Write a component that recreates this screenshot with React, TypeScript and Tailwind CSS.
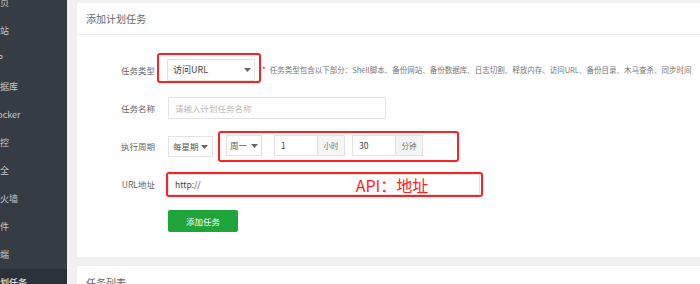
import React from "react";

const Caret = () => (
  <svg width="7" height="4" viewBox="0 0 7 4" className="shrink-0">
    <polygon points="0,0 7,0 3.5,4" fill="#666" />
  </svg>
);

const sideItems = ["首页", "网站", "FTP", "数据库", "Docker", "监控", "安全", "防火墙", "文件", "终端", "计划任务"];

export default function App() {
  return (
    <div className="w-[700px] h-[284px] overflow-hidden flex bg-[#f0f0f0] font-['Noto_Sans_CJK_SC','Noto_Sans',sans-serif]">
      <div className="w-[67px] shrink-0 bg-[#353c44] overflow-hidden">
        <div className="flex flex-col mt-[-11px]">
          {sideItems.map((t, i) => (
            <div
              key={t}
              className={
                "h-[28px] flex items-center whitespace-nowrap text-[9px] text-[#c8c8c8] " +
                (i === sideItems.length - 1 ? "bg-[#2b3138] text-white" : "")
              }
            >
              <span className={t === "FTP" ? "ml-[-13px]" : "ml-[-9px]"}>{t}</span>
            </div>
          ))}
        </div>
      </div>

      <div className="flex-1 flex flex-col pl-[10px] pt-[3px] gap-[9px] min-w-0">
        <div className="h-[254px] shrink-0 bg-white rounded-l-[2px] flex flex-col">
          <div className="h-[32px] border-b border-[#eeeeee] pl-[9px] flex items-center text-[10px] text-[#666]">
            添加计划任务
          </div>

          <div className="flex flex-col pt-[18px] text-[8.5px] text-[#555]">
            {/* Row 1 */}
            <div className="flex items-center">
              <div className="w-[80px] pr-[2px] pt-[4px] text-right text-[#666]">任务类型</div>
              <div className="border-2 border-[#ff2121] rounded-[3px] pl-[8px] pr-[4px] pt-[4px]">
                <div className="w-[88px] h-[22px] border border-[#e3e3e3] flex items-center justify-between pl-[5px] pr-[3px] text-[9px] text-[#444]">
                  <span>访问URL</span>
                  <Caret />
                </div>
              </div>
              <div className="pt-[4px] flex items-center whitespace-nowrap">
                <span className="ml-[1px] text-[#f00] text-[8px]">*</span>
                <span className="ml-[4px] text-[7.5px] text-[#777]">
                  任务类型包含以下部分：Shell脚本、备份网站、备份数据库、日志切割、释放内存、访问URL、备份目录、木马查杀、同步时间
                </span>
              </div>
            </div>

            {/* Row 2 */}
            <div className="flex items-center mt-[14px]">
              <div className="w-[80px] pr-[2px] text-right text-[#666]">任务名称</div>
              <div className="ml-[11px] w-[218px] h-[22px] border border-[#e3e3e3] rounded-[2px] flex items-center pl-[6px] text-[#bbb]">
                请输入计划任务名称
              </div>
            </div>

            {/* Row 3 */}
            <div className="flex items-center mt-[12px]">
              <div className="w-[80px] pr-[2px] text-right text-[#666]">执行周期</div>
              <div className="ml-[11px] w-[45px] h-[21px] border border-[#e3e3e3] flex items-center justify-between pl-[4px] pr-[4px] text-[#555]">
                <span>每星期</span>
                <Caret />
              </div>
              <div className="ml-[5px] border-2 border-[#ff2121] rounded-[3px] pl-[6px] pr-[34px] pt-[2px] pb-[4px] flex items-center">
                <div className="w-[36px] h-[21px] border border-[#e3e3e3] flex items-center justify-between pl-[3px] pr-[3px]">
                  <span>周一</span>
                  <Caret />
                </div>
                <div className="ml-[12px] flex h-[21px]">
                  <div className="w-[44px] border border-[#e3e3e3] flex items-center pl-[6px] text-[#444]">1</div>
                  <div className="w-[27px] border border-l-0 border-[#e3e3e3] bg-[#f5f5f5] flex items-center justify-center text-[7.5px] text-[#777]">小时</div>
                </div>
                <div className="ml-[7px] flex h-[21px]">
                  <div className="w-[44px] border border-[#e3e3e3] flex items-center pl-[6px] text-[#444]">30</div>
                  <div className="w-[27px] border border-l-0 border-[#e3e3e3] bg-[#f5f5f5] flex items-center justify-center text-[7.5px] text-[#777]">分钟</div>
                </div>
              </div>
            </div>

            {/* Row 4 */}
            <div className="flex items-center mt-[10px]">
              <div className="w-[80px] pr-[2px] text-right text-[#666]">URL地址</div>
              <div className="ml-[9px] border-2 border-[#ff2121] rounded-[3px] pr-[1px]">
                <div className="w-[312px] h-[21px] border border-[#e3e3e3] flex items-center pl-[6px] text-[#444]">
                  <span>http://</span>
                  <span className="ml-[155px] text-[16px] leading-none text-[#ff2121] whitespace-nowrap">API：地址</span>
                </div>
              </div>
            </div>

            {/* Button */}
            <div className="mt-[13px] ml-[91px]">
              <div className="w-[70px] h-[22px] rounded-[2px] bg-[#20a53a] text-white flex items-center justify-center">
                添加任务
              </div>
            </div>
          </div>
        </div>

        <div className="flex-1 bg-white rounded-l-[2px] pl-[9px] pt-[9px] text-[10px] text-[#666]">
          任务列表
        </div>
      </div>
    </div>
  );
}
